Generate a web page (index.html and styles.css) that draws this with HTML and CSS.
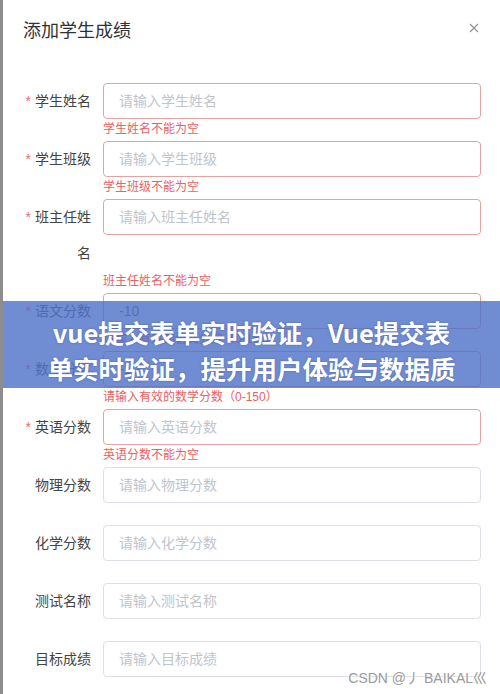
FILE: index.html
```html
<!DOCTYPE html>
<html lang="zh-CN">
<head>
	<meta charset="UTF-8">
	<title>添加学生成绩</title>
	<link rel="stylesheet" href="styles.css">
</head>
<body>

	<div class="dialog">
		<div class="dialog-header">
			<span class="dialog-title">添加学生成绩</span>
			<button type="button" class="dialog-close" aria-label="close">
				<svg width="10" height="10" viewBox="0 0 10 10"><path d="M1 1L9 9M9 1L1 9" stroke="#909399" stroke-width="1.2" fill="none"/></svg>
			</button>
		</div>

		<form class="score-form">
			<div class="form-item is-required is-error">
				<label class="form-label">学生姓名</label>
				<input class="form-input" type="text" placeholder="请输入学生姓名">
				<div class="form-error">学生姓名不能为空</div>
			</div>
			<div class="form-item is-required is-error">
				<label class="form-label">学生班级</label>
				<input class="form-input" type="text" placeholder="请输入学生班级">
				<div class="form-error">学生班级不能为空</div>
			</div>
			<div class="form-item is-required is-error">
				<label class="form-label">班主任姓名</label>
				<input class="form-input" type="text" placeholder="请输入班主任姓名">
				<div class="form-error">班主任姓名不能为空</div>
			</div>
			<div class="form-item is-required is-error">
				<label class="form-label">语文分数</label>
				<input class="form-input" type="text" value="-10">
				<div class="form-error">请输入有效的语文分数（0-150）</div>
			</div>
			<div class="form-item is-required is-error">
				<label class="form-label">数学分数</label>
				<input class="form-input" type="text" value="-10">
				<div class="form-error">请输入有效的数学分数（0-150）</div>
			</div>
			<div class="form-item is-required is-error">
				<label class="form-label">英语分数</label>
				<input class="form-input" type="text" placeholder="请输入英语分数">
				<div class="form-error">英语分数不能为空</div>
			</div>
			<div class="form-item">
				<label class="form-label">物理分数</label>
				<input class="form-input" type="text" placeholder="请输入物理分数">
				<div class="form-error"></div>
			</div>
			<div class="form-item">
				<label class="form-label">化学分数</label>
				<input class="form-input" type="text" placeholder="请输入化学分数">
				<div class="form-error"></div>
			</div>
			<div class="form-item">
				<label class="form-label">测试名称</label>
				<input class="form-input" type="text" placeholder="请输入测试名称">
				<div class="form-error"></div>
			</div>
			<div class="form-item">
				<label class="form-label">目标成绩</label>
				<input class="form-input" type="text" placeholder="请输入目标成绩">
				<div class="form-error"></div>
			</div>
		</form>
	</div>

	<!-- title banner -->
	<div class="title-banner">
		<div class="banner-line">vue提交表单实时验证，Vue提交表</div>
		<div class="banner-line">单实时验证，提升用户体验与数据质</div>
	</div>

	<div class="watermark">CSDN @丿 BAIKAL巛</div>

</body>
</html>
```

FILE: styles.css
```css
html, body{
	margin: 0;
	padding: 0;
	height: 694px;
	overflow: hidden;
}
body{
	position: relative;
	font-family: "Liberation Sans", "Noto Sans CJK SC", sans-serif;
	font-size: 14px;
	color: #303133;
	background: #fff;
	border-left: 3px solid #8d8d8d;
	box-sizing: border-box;
}
button{
	background: none;
	border: 0;
	padding: 0;
	margin: 0;
	font: inherit;
	line-height: 0;
	cursor: pointer;
}

.dialog{
	padding: 0 19px 0 16px;
}
.dialog-header{
	display: flex;
	justify-content: space-between;
	align-items: flex-start;
	padding: 19px 0 0 4px;
}
.dialog-title{
	font-size: 18px;
	line-height: 24px;
	color: #303133;
}
.dialog-close{
	margin: 4px 2px 0 0;
}

.score-form{
	margin: 40px 0 0 0;
}
.form-item{
	display: grid;
	grid-template-columns: 84px 378px;
	grid-template-rows: auto 22px;
}
.form-label{
	box-sizing: border-box;
	padding-right: 12px;
	text-align: right;
	line-height: 36px;
	font-size: 14px;
	color: #444;
}
.is-required .form-label:before{
	content: '*';
	color: #f56c6c;
	margin-right: 4px;
}
.form-input{
	display: block;
	align-self: start;
	box-sizing: border-box;
	width: 100%;
	height: 36px;
	margin: 0;
	padding: 0 15px;
	border: 1px solid #dcdfe6;
	border-radius: 4px;
	font-family: inherit;
	font-size: 14px;
	color: #606266;
	outline: none;
	background: #fff;
}
.form-input::placeholder{ color: #c0c4cc; }
.is-error .form-input{ border-color: #e3a3a3; }
.form-error{
	grid-column: 2;
	padding-top: 4px;
	font-size: 12px;
	line-height: 1;
	color: #e8625f;
}

/* overlay */
.title-banner{
	position: absolute;
	top: 301px;
	left: 0;
	right: 0;
	height: 87px;
	box-sizing: border-box;
	padding-top: 13px;
	overflow: hidden;
	background: rgba(80, 115, 200, 0.82);
	color: #fff;
	font-family: "Noto Sans CJK SC", sans-serif;
	font-weight: bold;
	font-size: 25.5px;
	line-height: 36px;
	text-align: center;
	text-shadow: 0 0 2px rgba(40, 60, 120, 0.5);
	white-space: nowrap;
}
.watermark{
	position: absolute;
	right: 13px;
	top: 669px;
	font-size: 14px;
	line-height: 18px;
	color: #9a9a9a;
	text-shadow: 0 0 2px #fff, 0 0 2px #fff;
}
```
